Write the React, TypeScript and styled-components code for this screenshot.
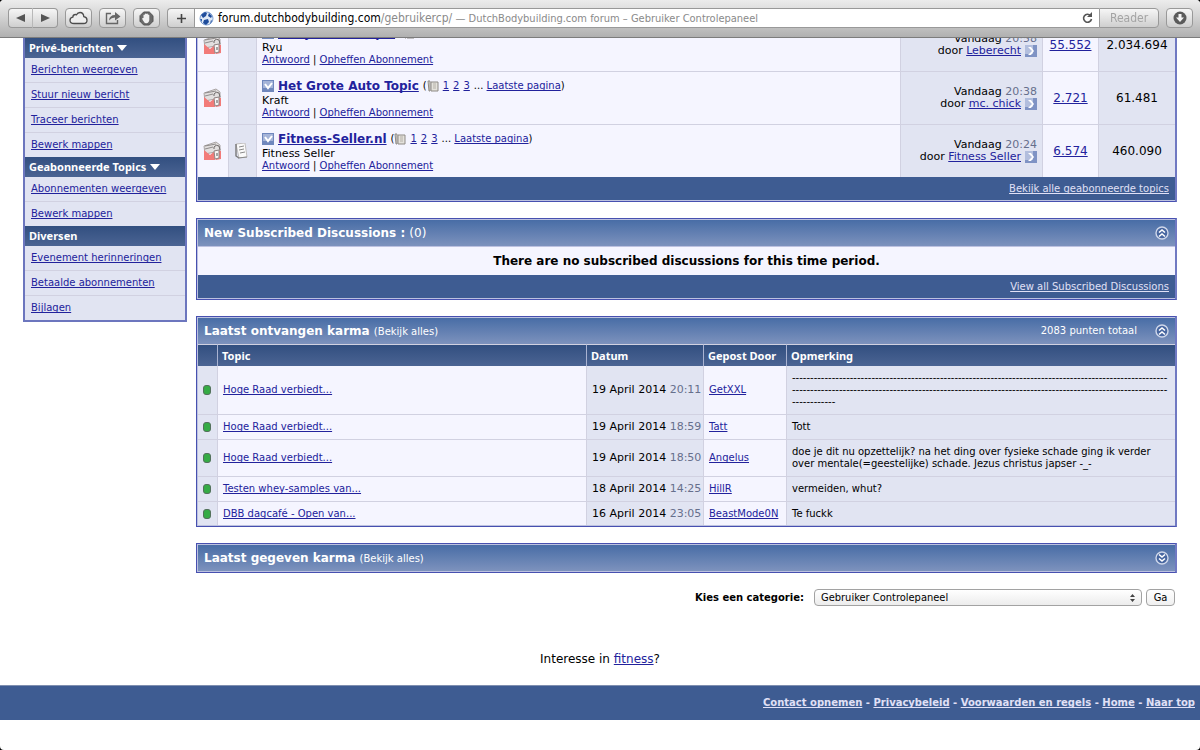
import React, { useState } from 'react';
import styled, { createGlobalStyle, css } from 'styled-components';

const verdana = '"DejaVu Sans", Verdana, sans-serif';
const tahoma = '"Noto Sans", Tahoma, sans-serif';
const lucida = '"DejaVu Sans Condensed", "Lucida Grande", sans-serif';

const GlobalStyle = createGlobalStyle`
  * { box-sizing: border-box; }
  html { background: #000; }
  body { margin: 0; font: 10px/12px ${verdana}; color: #000; }
  a { color: #22229c; text-decoration-skip-ink: none; }
  svg { display: block; flex: none; }
`;

const Window = styled.div`
  min-height: 100vh;
  background: #fff;
  border-radius: 4px;
  overflow: hidden;
`;

/* Browser toolbar, pinned over the scrolled page */
const Toolbar = styled.header`
  position: fixed;
  top: 0;
  left: 0;
  right: 0;
  z-index: 1;
  height: 38px;
  padding: 8px 7px 0 8px;
  display: flex;
  gap: 7px;
  align-items: flex-start;
  background: linear-gradient(#ececec, #d6d6d6 40%, #b0b0b0);
  border-bottom: 1px solid #7c7c7c;
  border-radius: 4px 4px 0 0;
  font-family: ${lucida};
`;

const ToolButton = styled.button<{ $wide?: boolean }>`
  width: ${(p) => (p.$wide ? 60 : 27)}px;
  height: 20px;
  padding: 0;
  display: flex;
  align-items: center;
  justify-content: center;
  border: 1px solid #999;
  border-radius: 4px;
  background: linear-gradient(#f6f6f6, #cfcfcf);
  color: #a4a4a4;
  font: 12px/16px ${lucida};
`;

const ButtonPair = styled.div`
  display: flex;
  ${ToolButton} {
    width: 25px;
  }
  ${ToolButton}:first-child {
    border-right-color: #b8b8b8;
    border-radius: 4px 0 0 4px;
  }
  ${ToolButton}:last-child {
    border-left: 0;
    border-radius: 0 4px 4px 0;
  }
`;

const AddressGroup = styled.div`
  flex: 1;
  display: flex;
  ${ToolButton}:first-child {
    border-right: 0;
    border-radius: 4px 0 0 4px;
  }
  ${ToolButton}:last-child {
    border-radius: 0 4px 4px 0;
  }
`;

const Address = styled.div`
  flex: 1;
  height: 20px;
  padding: 0 6px 0 4px;
  display: flex;
  align-items: center;
  gap: 4px;
  background: #fff;
  border: 1px solid #999;
  border-right: 0;
  color: #8a8a8a;
`;

const AddressText = styled.span`
  flex: 1;
  white-space: nowrap;
  font: 12px/16px ${lucida};
  small { font-size: 11px; }
  b { font-weight: normal; color: #000; }
`;

const Columns = styled.div`
  padding: 17px 23px 0;
  display: flex;
  align-items: flex-start;
  gap: 9px;
`;

const Sidebar = styled.nav`
  flex: none;
  width: 164px;
  padding-top: 19px;
  border: 2px solid #6c76be;
  background: #e1e4f2;
`;

const darkBar = css`
  background: linear-gradient(#324f80, #4b6493);
  color: #fff;
  font: bold 11px/20px ${tahoma};
`;

const SideHeading = styled.h2`
  ${darkBar}
  margin: 0;
  padding: 0 4px;
  display: flex;
  align-items: center;
  gap: 4px;
`;

const SideList = styled.ul`
  margin: 0;
  padding: 0;
  list-style: none;
`;

const SideItem = styled.li`
  padding: 0 6px;
  line-height: 24px;
  & + & { border-top: 1px solid #d1d1e1; }
`;

const Main = styled.main`
  flex: 1;
  min-width: 0;
  display: flex;
  flex-direction: column;
  gap: 16px;
`;

const Panel = styled.section`
  border: 1px solid #4750b0;
  border-right: 2px solid #7079c2;
  padding: 1px 0 1px 1px;
  background: #bcc1e0;
`;

const PanelHead = styled.header`
  height: 26px;
  padding: 0 6px;
  display: flex;
  align-items: center;
  justify-content: space-between;
  background: linear-gradient(#486da6, #7d92bd);
  color: #fff;
`;

const PanelTitle = styled.h2`
  margin: 0;
  font: bold 12px/16px ${verdana};
  small, a { font-size: 10px; font-weight: normal; color: #fff; text-decoration: none; }
  span { font-weight: normal; }
`;

const HeadSide = styled.div`
  display: flex;
  align-items: center;
  gap: 18px;
`;

const CollapseButton = styled.button`
  padding: 0;
  border: 0;
  background: none;
`;

const EmptyNote = styled.p`
  margin: 1px 0 0;
  background: #f5f5ff;
  font: bold 12px/28px ${verdana};
  text-align: center;
`;

const PanelFoot = styled.footer`
  height: 23px;
  padding: 0 6px;
  background: #3e5c92;
  color: #e0e0f6;
  line-height: 24px;
  text-align: right;
  a { color: #e0e0f6; }
`;

const Table = styled.table`
  width: 100%;
  table-layout: fixed;
  border-spacing: 0;
`;

const Cell = styled.td<{ $alt?: boolean; $align?: string }>`
  padding: 6px;
  background: ${(p) => (p.$alt ? '#e1e4f2' : '#f5f5ff')};
  text-align: ${(p) => p.$align ?? 'left'};
  border-right: 1px solid #d1d1e1;
  border-bottom: 1px solid #d1d1e1;
  &:last-child { border-right: 0; }
  tr:last-child > & { border-bottom: 0; }
`;

const TopicCell = styled(Cell)`
  height: 53px;
  padding: 0 5px;
  tr:last-child > & { height: 52px; }
`;

const LastPostCell = styled(TopicCell)`
  font-size: 11px;
`;

const CountCell = styled(TopicCell)`
  padding: 0;
  font-size: 12px;
`;

const TopicLine = styled.div`
  display: flex;
  align-items: center;
  gap: 4px;
  height: 16px;
`;

const TopicTitle = styled.a`
  font: bold 12px/16px ${verdana};
`;

const Pages = styled.span`
  display: flex;
  align-items: center;
  gap: 4px;
`;

const PagesLead = styled.span`
  display: flex;
  align-items: center;
`;

const Starter = styled.div`
  font-size: 11px;
  line-height: 13px;
`;

const LastPost = styled.div`
  display: flex;
  justify-content: flex-end;
  align-items: center;
  gap: 4px;
`;

const Time = styled.span`
  color: #666f8c;
`;

const HeadCell = styled.th`
  ${darkBar}
  height: 22px;
  padding: 0 4px;
  text-align: left;
  border-top: 1px solid #d1d1e1;
  border-right: 1px solid #a9b3d2;
  &:last-child { border-right: 0; }
`;

const KarmaCell = styled(Cell)`
  padding: 6px 6px 6px 5px;
  overflow-wrap: anywhere;
  tr:last-child > & { padding-bottom: 5px; }
`;

const DateCell = styled(KarmaCell)`
  padding-right: 0;
  font-size: 11px;
`;

const PosterCell = styled(KarmaCell)`
  padding-right: 0;
`;

const KarmaDot = styled.span`
  display: block;
  width: 8px;
  height: 10px;
  border: 1px solid #54705c;
  border-radius: 3px;
  background: #35ab45;
`;

const JumpForm = styled.form`
  padding-right: 2px;
  display: flex;
  justify-content: flex-end;
  align-items: center;
  gap: 4px;
  height: 17px;
`;

const JumpLabel = styled.label`
  margin-right: 6px;
  font-weight: bold;
`;

const selectArrows =
  "url(\"data:image/svg+xml,%3Csvg xmlns='http://www.w3.org/2000/svg' width='5' height='8'%3E%3Cpath d='M0 3 2.5 0 5 3zM0 5h5L2.5 8z' fill='%23444'/%3E%3C/svg%3E\")";

const Select = styled.select`
  appearance: none;
  width: 328px;
  height: 17px;
  padding: 0 6px;
  border: 1px solid #a2a2a2;
  border-radius: 4px;
  background: ${selectArrows} no-repeat right 6px center, linear-gradient(#fff, #ececec);
  color: #000;
  font: 11px/14px ${lucida};
`;

const GoButton = styled.button`
  width: 29px;
  height: 17px;
  padding: 0;
  border: 1px solid #a2a2a2;
  border-radius: 4px;
  background: linear-gradient(#fff, #f0f0f0);
  color: #000;
  font: 11px/14px ${lucida};
`;

const Interest = styled.p`
  margin: 44px 0 17px;
  text-align: center;
  font-size: 12px;
  line-height: 18px;
`;

const PageFooter = styled.footer`
  height: 35px;
  padding: 0 5px;
  border-top: 1px solid #7f8fb0;
  background: #3e5c92;
  color: #e0e0f6;
  font-weight: bold;
  line-height: 34px;
  text-align: right;
  a { color: #e0e0f6; }
`;

const FolderIcon = () => (
  <svg width="20" height="20" viewBox="0 0 20 20">
    <path d="M1 5 13 1l4 3v6L2 13z" fill="#e2dfdf" stroke="#aaa5a5" />
    <path d="M2 5 13 3M2 8l8-2" fill="none" stroke="#8f8b8b" />
    <path d="M1 9l6 5 5-4v9H1z" fill="#f27b79" />
    <path d="M11 10l3-1 4 1v8l-5 1z" fill="#f27b79" />
    <path d="M11 8V6q2-3 5-1l1 4" fill="none" stroke="#6d6868" />
    <path d="M11 10l5-1v8l-4 1z" fill="#faf6f6" stroke="#8d8686" />
    <path d="M14 12v3" stroke="#555" />
  </svg>
);

const NoteIcon = () => (
  <svg width="16" height="16" viewBox="0 0 16 16">
    <path d="M2 1l9-1 2 14-8 1z" fill="#fafafa" stroke="#c0bebe" />
    <path d="M2 1v12l3 2" fill="none" stroke="#777" strokeWidth="1.4" />
    <path d="M5 4l5-1M5 7l5-1M6 10l5-1M4 15l9-1" fill="none" stroke="#8a8a8a" />
  </svg>
);

const PagesIcon = () => (
  <svg width="12" height="12" viewBox="0 0 12 12">
    <path d="M1 1h2v10H2zM4 2h7v9H4z" fill="#e4e2dc" stroke="#8e8a85" />
    <path d="M6 4h3M6 6h3M6 8h3" stroke="#b5b0a8" />
  </svg>
);

const CheckIcon = () => (
  <svg width="12" height="12" viewBox="0 0 12 12">
    <rect width="12" height="12" fill="#6f87bd" />
    <rect x="1" y="1" width="10" height="7" fill="#a5b4d8" />
    <path d="M3 4l3 4 4-5" fill="none" stroke="#fff" strokeWidth="2" />
  </svg>
);

const GoLastIcon = () => (
  <svg width="12" height="12" viewBox="0 0 12 12">
    <rect width="12" height="12" fill="#7f93c4" />
    <rect width="8" height="9" fill="#b2bedd" />
    <path d="M3 2l4 4-4 4h3l3-4-3-4z" fill="#fff" />
  </svg>
);

const CollapseIcon = ({ down }: { down?: boolean }) => (
  <svg width="14" height="14" viewBox="0 0 14 14">
    <circle cx="7" cy="7" r="6" fill="#4867a1" stroke="#cfd7ea" strokeWidth="1.4" />
    <path
      d={down ? 'M4 3.500l3 2.500 3-2.500M4 7.500l3 2.500 3-2.500' : 'M4 6.500 7 4l3 2.500M4 10.500 7 8l3 2.500'}
      fill="none"
      stroke="#fff"
      strokeWidth="1.6"
    />
  </svg>
);

const Triangle = () => (
  <svg width="10" height="6" viewBox="0 0 10 6">
    <path d="M0 0h10L5 6z" fill="#fff" />
  </svg>
);

const Arrow = ({ right }: { right?: boolean }) => (
  <svg width="9" height="8" viewBox="0 0 9 8">
    <path d={right ? 'M0 0v8l9-4z' : 'M9 0v8L0 4z'} fill="#555" />
  </svg>
);

const CloudIcon = () => (
  <svg width="19" height="14" viewBox="0 0 19 14">
    <path
      d="M5 12.5q-4 0-4-3.300q0-2.500 2.800-3Q4 3.500 6.500 3.500q.6 0 1 .3Q8.600 1.500 11 1.500q3.500 0 3.800 4.200Q18 6.200 18 9.200q0 3.300-3.500 3.300z"
      fill="#eee"
      stroke="#4c4c4c"
      strokeWidth="1.3"
    />
  </svg>
);

const ShareIcon = () => (
  <svg width="16" height="14" viewBox="0 0 16 14">
    <path d="M6 2.500H1.500v10h11V9" fill="none" stroke="#666" strokeWidth="1.4" />
    <path d="M4 9.500Q4.500 4 10 4V1l5.500 4.500L10 9.500V6.500Q6.500 6.500 4 9.500z" fill="#666" />
  </svg>
);

const HandIcon = () => (
  <svg width="15" height="15" viewBox="0 0 15 15">
    <path d="M4.700 1h5.600L14 4.700v5.600L10.300 14H4.700L1 10.300V4.700z" fill="#6a6a6a" stroke="#555" />
    <path d="M4.500 7V4q.7-1 1.400 0V3q.8-1 1.500 0 .8-1 1.500 0v1q.8-.8 1.400 0v5q-.3 3-3 3.200-2 0-3.300-2.700L3 7.500q.7-.8 1.500-.5z" fill="#f0f0f0" />
  </svg>
);

const PlusIcon = () => (
  <svg width="11" height="11" viewBox="0 0 11 11">
    <path d="M5.500 1v9M1 5.500h9" stroke="#444" strokeWidth="1.600" />
  </svg>
);

const GlobeIcon = () => (
  <svg width="15" height="15" viewBox="0 0 15 15">
    <circle cx="7.500" cy="7.500" r="6.500" fill="#dfe9f6" stroke="#7d9fd2" />
    <path d="M2 4l4-3 2 1-1 3-3 2zM10 2l3 3-1 2-3-2zM5 9l4-1 1 3-3 3-3-2zM12 9l1 1-2 3z" fill="#1f4d9c" />
    <path d="M1 8l2 0v3z" fill="#2a5bab" />
  </svg>
);

const ReloadIcon = () => (
  <svg width="11" height="12" viewBox="0 0 11 12">
    <path d="M8.500 3.500A4 4 0 1 0 9.500 7" fill="none" stroke="#555" strokeWidth="1.600" />
    <path d="M10 0v5H5z" fill="#555" />
  </svg>
);

const DownloadIcon = () => (
  <svg width="14" height="14" viewBox="0 0 14 14">
    <circle cx="7" cy="7" r="6.500" fill="#5a5a5a" />
    <path d="M5.500 3h3v3.500H11L7 11 3 6.500h2.500z" fill="#f2f2f2" />
  </svg>
);

const menu = [
  { title: 'Privé-berichten', arrow: true, items: ['Berichten weergeven', 'Stuur nieuw bericht', 'Traceer berichten', 'Bewerk mappen'] },
  { title: 'Geabonneerde Topics', arrow: true, items: ['Abonnementen weergeven', 'Bewerk mappen'] },
  { title: 'Diversen', arrow: false, items: ['Evenement herinneringen', 'Betaalde abonnementen', 'Bijlagen'] },
];

const topics = [
  { title: 'Body Movie Topic', starter: 'Ryu', time: '20:58', by: 'Leberecht', replies: '55.552', views: '2.034.694', own: false },
  { title: 'Het Grote Auto Topic', starter: 'Kraft', time: '20:38', by: 'mc. chick', replies: '2.721', views: '61.481', own: false },
  { title: 'Fitness-Seller.nl', starter: 'Fitness Seller', time: '20:24', by: 'Fitness Seller', replies: '6.574', views: '460.090', own: true },
];

const karma = [
  { topic: 'Hoge Raad verbiedt...', date: '19 April 2014', time: '20:11', by: 'GetXXL', note: '-'.repeat(220) },
  { topic: 'Hoge Raad verbiedt...', date: '19 April 2014', time: '18:59', by: 'Tatt', note: 'Tott' },
  {
    topic: 'Hoge Raad verbiedt...',
    date: '19 April 2014',
    time: '18:50',
    by: 'Angelus',
    note: 'doe je dit nu opzettelijk? na het ding over fysieke schade ging ik verder over mentale(=geestelijke) schade. Jezus christus japser -_-',
  },
  { topic: 'Testen whey-samples van...', date: '18 April 2014', time: '14:25', by: 'HillR', note: 'vermeiden, whut?' },
  { topic: 'DBB dagcafé - Open van...', date: '16 April 2014', time: '23:05', by: 'BeastMode0N', note: 'Te fuckk' },
];

const footerLinks = ['Contact opnemen', 'Privacybeleid', 'Voorwaarden en regels', 'Home', 'Naar top'];

export default function App() {
  const [category, setCategory] = useState('cp');
  return (
    <Window>
      <GlobalStyle />
      <Toolbar>
        <ButtonPair>
          <ToolButton aria-label="Vorige"><Arrow /></ToolButton>
          <ToolButton aria-label="Volgende"><Arrow right /></ToolButton>
        </ButtonPair>
        <ToolButton aria-label="iCloud-tabs"><CloudIcon /></ToolButton>
        <ToolButton aria-label="Deel"><ShareIcon /></ToolButton>
        <ToolButton aria-label="Blokkeer"><HandIcon /></ToolButton>
        <AddressGroup>
          <ToolButton aria-label="Voeg toe"><PlusIcon /></ToolButton>
          <Address>
            <GlobeIcon />
            <AddressText>
              <b>forum.dutchbodybuilding.com</b>/gebruikercp/ <small>— DutchBodybuilding.com forum – Gebruiker Controlepaneel</small>
            </AddressText>
            <ReloadIcon />
          </Address>
          <ToolButton $wide>Reader</ToolButton>
        </AddressGroup>
        <ToolButton aria-label="Downloads"><DownloadIcon /></ToolButton>
      </Toolbar>

      <Columns>
        <Sidebar>
          {menu.map((group) => (
            <React.Fragment key={group.title}>
              <SideHeading>
                {group.title}
                {group.arrow && <Triangle />}
              </SideHeading>
              <SideList>
                {group.items.map((item) => (
                  <SideItem key={item}><a href="#">{item}</a></SideItem>
                ))}
              </SideList>
            </React.Fragment>
          ))}
        </Sidebar>

        <Main>
          <Panel>
            <Table>
              <colgroup>
                <col width="31" />
                <col width="28" />
                <col />
                <col width="142" />
                <col width="56" />
                <col width="76" />
              </colgroup>
              <tbody>
                {topics.map((t) => (
                  <tr key={t.title}>
                    <TopicCell><FolderIcon /></TopicCell>
                    <TopicCell $alt>{t.own && <NoteIcon />}</TopicCell>
                    <TopicCell>
                      <TopicLine>
                        <CheckIcon />
                        <TopicTitle href="#">{t.title}</TopicTitle>
                        <Pages>
                          <PagesLead>(<PagesIcon /></PagesLead>
                          <a href="#">1</a>
                          <a href="#">2</a>
                          <a href="#">3</a>
                          <span>... <a href="#">Laatste pagina</a>)</span>
                        </Pages>
                      </TopicLine>
                      <Starter>{t.starter}</Starter>
                      <div><a href="#">Antwoord</a> | <a href="#">Opheffen Abonnement</a></div>
                    </TopicCell>
                    <LastPostCell $alt $align="right">
                      Vandaag <Time>{t.time}</Time>
                      <LastPost>
                        <span>door <a href="#">{t.by}</a></span>
                        <GoLastIcon />
                      </LastPost>
                    </LastPostCell>
                    <CountCell $align="center"><a href="#">{t.replies}</a></CountCell>
                    <CountCell $alt $align="center">{t.views}</CountCell>
                  </tr>
                ))}
              </tbody>
            </Table>
            <PanelFoot><a href="#">Bekijk alle geabonneerde topics</a></PanelFoot>
          </Panel>

          <Panel>
            <PanelHead>
              <PanelTitle>New Subscribed Discussions : <span>(0)</span></PanelTitle>
              <CollapseButton aria-label="Inklappen"><CollapseIcon /></CollapseButton>
            </PanelHead>
            <EmptyNote>There are no subscribed discussions for this time period.</EmptyNote>
            <PanelFoot><a href="#">View all Subscribed Discussions</a></PanelFoot>
          </Panel>

          <Panel>
            <PanelHead>
              <PanelTitle>Laatst ontvangen karma <small>(<a href="#">Bekijk alles</a>)</small></PanelTitle>
              <HeadSide>
                2083 punten totaal
                <CollapseButton aria-label="Inklappen"><CollapseIcon /></CollapseButton>
              </HeadSide>
            </PanelHead>
            <Table>
              <colgroup>
                <col width="20" />
                <col />
                <col width="117" />
                <col width="83" />
                <col width="388" />
              </colgroup>
              <thead>
                <tr>
                  <HeadCell />
                  <HeadCell>Topic</HeadCell>
                  <HeadCell>Datum</HeadCell>
                  <HeadCell>Gepost Door</HeadCell>
                  <HeadCell>Opmerking</HeadCell>
                </tr>
              </thead>
              <tbody>
                {karma.map((k) => (
                  <tr key={k.time}>
                    <KarmaCell $alt><KarmaDot /></KarmaCell>
                    <KarmaCell><a href="#">{k.topic}</a></KarmaCell>
                    <DateCell $alt>{k.date} <Time>{k.time}</Time></DateCell>
                    <PosterCell><a href="#">{k.by}</a></PosterCell>
                    <KarmaCell $alt>{k.note}</KarmaCell>
                  </tr>
                ))}
              </tbody>
            </Table>
          </Panel>

          <Panel>
            <PanelHead>
              <PanelTitle>Laatst gegeven karma <small>(<a href="#">Bekijk alles</a>)</small></PanelTitle>
              <CollapseButton aria-label="Uitklappen"><CollapseIcon down /></CollapseButton>
            </PanelHead>
          </Panel>

          <JumpForm onSubmit={(e) => e.preventDefault()}>
            <JumpLabel htmlFor="category">Kies een categorie:</JumpLabel>
            <Select id="category" value={category} onChange={(e) => setCategory(e.target.value)}>
              <option value="cp">Gebruiker Controlepaneel</option>
            </Select>
            <GoButton type="submit">Ga</GoButton>
          </JumpForm>
        </Main>
      </Columns>

      <Interest>Interesse in <a href="#">fitness</a>?</Interest>

      <PageFooter>
        {footerLinks.map((link, i) => (
          <React.Fragment key={link}>
            {i > 0 && ' - '}
            <a href="#">{link}</a>
          </React.Fragment>
        ))}
      </PageFooter>
    </Window>
  );
}
